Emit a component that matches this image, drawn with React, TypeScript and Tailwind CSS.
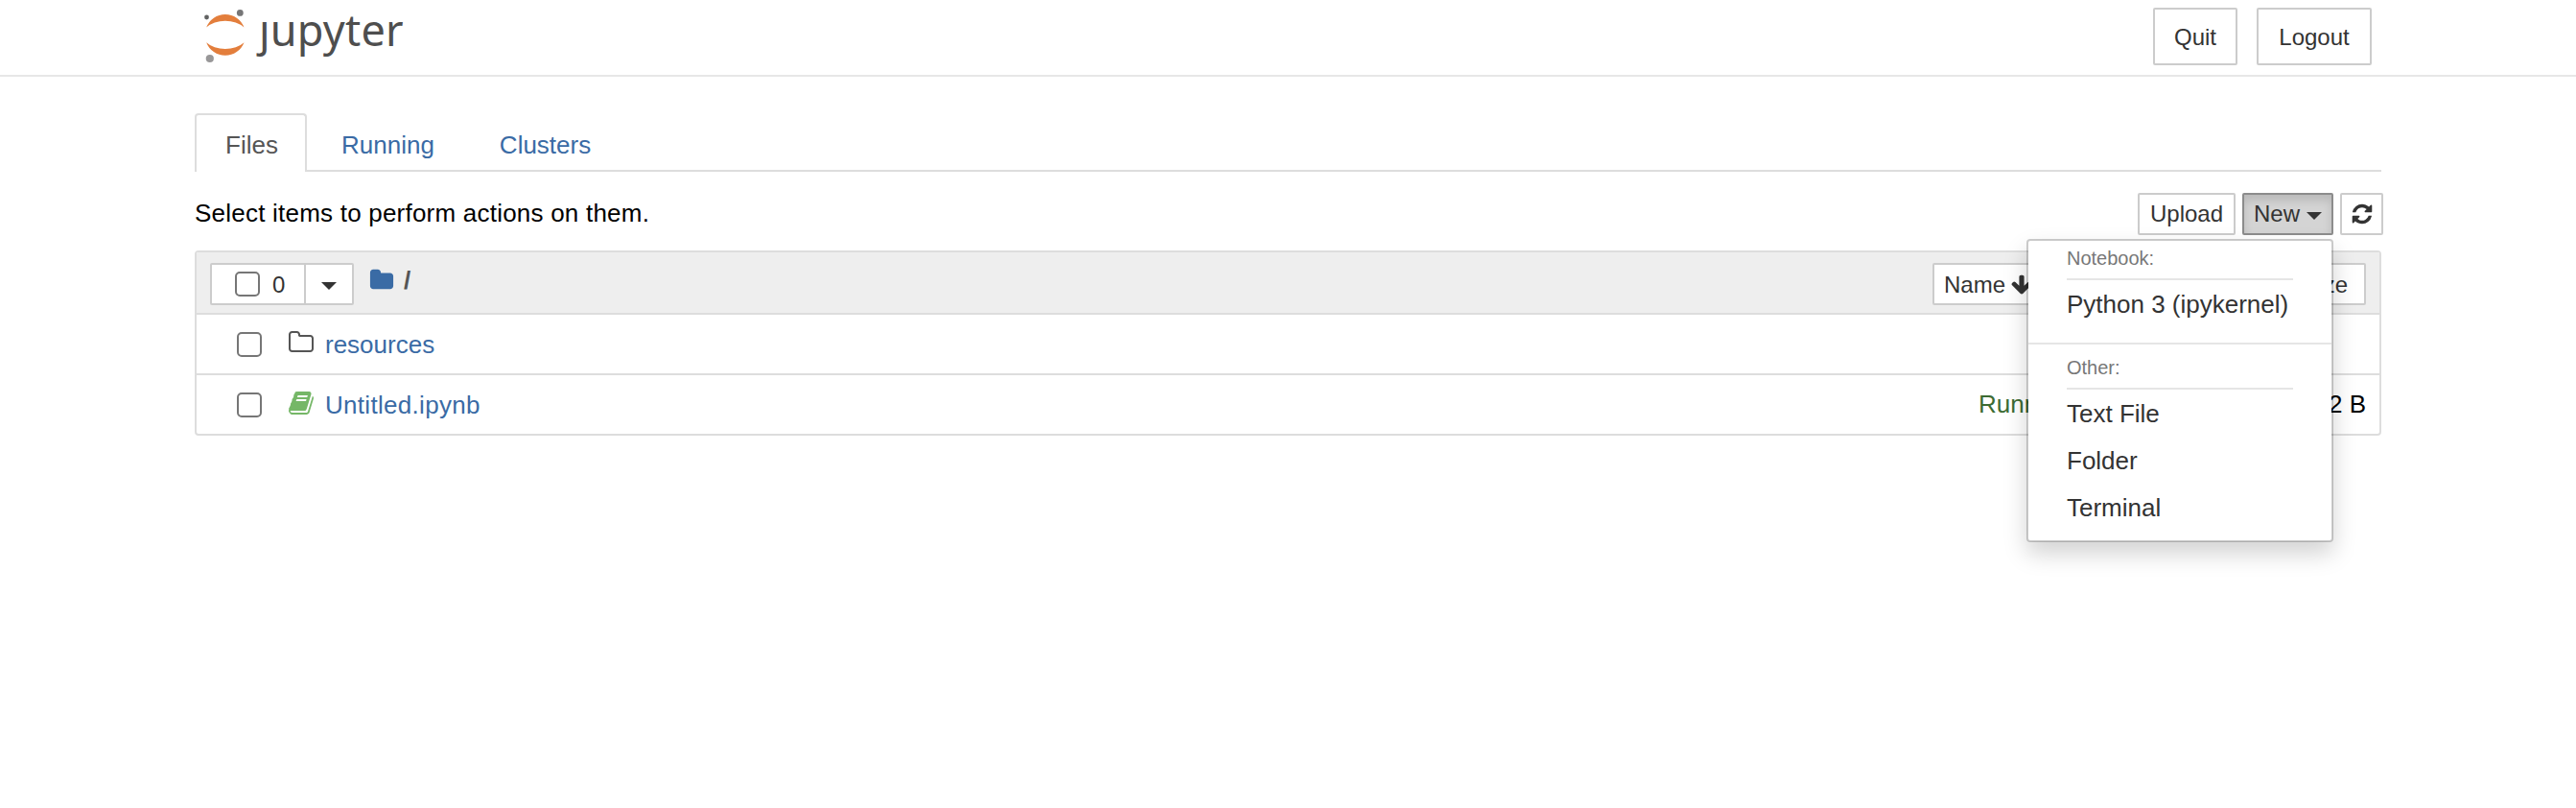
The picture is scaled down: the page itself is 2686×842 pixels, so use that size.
import React from "react";

const ICONS = {
  folder:
    "M1728 608v704q0 92-66 158t-158 66h-1216q-92 0-158-66t-66-158v-960q0-92 66-158t158-66h320q92 0 158 66t66 158v32h672q92 0 158 66t66 158z",
  folderOpen:
    "M1600 1312v-704q0-40-28-68t-68-28h-704q-40 0-68-28t-28-68v-64q0-40-28-68t-68-28h-320q-40 0-68 28t-28 68v960q0 40 28 68t68 28h1216q40 0 68-28t28-68zm128-704v704q0 92-66 158t-158 66h-1216q-92 0-158-66t-66-158v-960q0-92 66-158t158-66h320q92 0 158 66t66 158v32h672q92 0 158 66t66 158z",
  book:
    "M1703 478q40 57 18 129l-275 906q-19 64-76.500 107.500t-122.500 43.500h-923q-77 0-148.500-53.500t-99.500-131.500q-24-67-2-127 0-4 3-27t4-37q1-8-3-21.500t-3-19.500q2-11 8-21t16.500-23.500 16.500-23.500q23-38 45-91.500t30-91.500q3-10 .5-30t-.5-28q3-11 17-28t17-23q21-36 42-92t25-90q1-9-2.500-32t.5-28q4-13 22-30.500t22-22.500q19-26 42.500-84.500t27.500-96.500q1-8-3-25.500t-2-26.500q2-8 9-18t18-23 17-21q8-12 16.500-30.500t15-35 16-36 19.500-32 26.500-23.500 36-11.500 47.500 5.500l-1 3q38-9 51-9h761q74 0 114 56t18 130l-274 906q-36 119-71.500 153.500t-128.500 34.500h-869q-27 0-38 15-11 16-1 43 24 70 144 70h923q29 0 56-15.500t35-41.500l300-987q7-22 5-57 38 15 59 43zm-1064 2q-4 13 2 22.500t20 9.500h608q13 0 25.500-9.500t16.500-22.500l21-64q4-13-2-22.500t-20-9.500h-608q-13 0-25.500 9.500t-16.500 22.500zm-83 256q-4 13 2 22.500t20 9.500h608q13 0 25.500-9.500t16.500-22.500l21-64q4-13-2-22.500t-20-9.500h-608q-13 0-25.500 9.500t-16.500 22.500z",
  refresh:
    "M1639 1056q0 5-1 7-64 268-268 434.500t-478 166.500q-146 0-282.500-55t-243.500-157l-129 129q-19 19-45 19t-45-19-19-45v-448q0-26 19-45t45-19h448q26 0 45 19t19 45-19 45l-137 137q71 66 161 102t187 36q134 0 250-65t186-179q11-17 53-117 8-23 30-23h192q13 0 22.500 9.500t9.500 22.500zm25-800v448q0 26-19 45t-45 19h-448q-26 0-45-19t-19-45 19-45l138-138q-148-137-349-137-134 0-250 65t-186 179q-11 17-53 117-8 23-30 23h-199q-13 0-22.500-9.500t-9.500-22.500v-7q65-268 270-434.500t480-166.500q146 0 284 55.500t245 156.500l130-129q19-19 45-19t45 19 19 45z",
  arrowDown:
    "M1675 832q0 53-37 90l-651 652q-39 37-91 37-53 0-90-37l-651-652q-38-36-38-90 0-53 38-91l74-75q39-37 91-37 53 0 90 37l294 294v-704q0-52 38-90t90-38h128q52 0 90 38t38 90v704l294-294q37-37 90-37 52 0 91 37l75 75q37 39 37 91z",
};

function Icon({ name, className }: { name: keyof typeof ICONS; className: string }) {
  return (
    <svg viewBox="0 0 1792 1792" fill="currentColor" className={`shrink-0 ${className}`}>
      <path d={ICONS[name]} />
    </svg>
  );
}

function Caret() {
  return <span className="border-x-8 border-t-8 border-x-transparent border-t-[#333]" />;
}

function Checkbox() {
  return <span className="block size-[26px] shrink-0 rounded-[5px] border-2 border-[#767676] bg-white" />;
}

function Logo() {
  return (
    <div className="flex h-[78px] items-start">
      <svg viewBox="0 0 44 60" className="mt-2 h-[60px] w-11 shrink-0">
        <path d="M2.200 20.500 A21 21 0 0 1 41.500 20.500 A25 18 0 0 0 2.200 20.500Z" fill="#e37e3c" />
        <path d="M2.200 36.200 A21 21 0 0 0 41.500 36.200 A25 18 0 0 1 2.200 36.200Z" fill="#e37e3c" />
        <circle cx="37.300" cy="5.400" r="3.400" fill="#767677" />
        <circle cx="2.500" cy="10" r="2.400" fill="#616262" />
        <circle cx="5.800" cy="53" r="4.100" fill="#989798" />
      </svg>
      <span className="ml-[13px] -mt-[1px] font-['Noto_Sans'] text-[45px] leading-[64px] tracking-[0.2px] text-[#4e4e4e] [clip-path:polygon(-10px_23px,15px_23px,15px_0,100%_0,100%_100%,-10px_100%)]">
        jupyter
      </span>
    </div>
  );
}

const button = "flex items-center border-2 border-[#ccc] bg-white rounded-[2px] text-[#333]";

function NewMenu() {
  const item = "h-[49px] pl-10 leading-[48px]";
  const label = "ml-10 w-[236px] border-b-2 border-[#e5e5e5] text-[20px] leading-[24px] text-[#777]";
  return (
    <div className="absolute right-0 top-[48px] z-10 h-[316px] w-[320px] rounded-[4px] border-2 border-black/20 bg-white bg-clip-padding text-[26px] text-[#333] shadow-[0_12px_24px_rgba(0,0,0,0.175)]">
      <div className={`${label} h-[41px] pt-[6px]`}>Notebook:</div>
      <div className={`${item} mt-[1px] mb-[15px]`}>Python 3 (ipykernel)</div>
      <div className="h-[2px] bg-[#e5e5e5]" />
      <div className={`${label} h-[47px] pt-[12px]`}>Other:</div>
      <div className="mt-[1px]">
        <div className={item}>Text File</div>
        <div className={item}>Folder</div>
        <div className={item}>Terminal</div>
      </div>
    </div>
  );
}

export default function App() {
  return (
    <div className="h-[842px] w-[2686px] overflow-hidden bg-white font-['Liberation_Sans',Arial,sans-serif] text-[26px] leading-[36px] text-black">
      <header className="flex h-20 items-start justify-between border-b-2 border-[#e7e7e7] pl-[213px] pr-[213px]">
        <Logo />
        <div className="mt-2 flex gap-5 text-[24px]">
          <button className={`${button} h-[60px] w-[88px] justify-center pt-[2px]`}>Quit</button>
          <button className={`${button} h-[60px] w-[120px] justify-center pt-[2px]`}>Logout</button>
        </div>
      </header>

      <main className="mx-[203px] pt-[38px]">
        <nav className="flex h-[61px] items-start border-b-2 border-[#ddd]">
          <a className="h-[61px] w-[117px] rounded-t-[4px] border-2 border-b-0 border-[#ddd] bg-white pl-[30px] pt-[13px] text-[#555]">
            Files
          </a>
          <a className="ml-[36px] pt-[15px] text-[#3a6ba5]">Running</a>
          <a className="ml-[68px] pt-[15px] text-[#3a6ba5]">Clusters</a>
        </nav>

        <div className="-mr-[2px] flex h-[82px] items-start justify-between pt-[22px]">
          <p className="mt-[3px] tracking-[0.22px]">Select items to perform actions on them.</p>
          <div className="flex gap-[7px] text-[24px]">
            <button className={`${button} h-[44px] w-[102px] justify-center`}>Upload</button>
            <div className="relative">
              <button className="flex h-[44px] w-[95px] items-center gap-[7px] rounded-[2px] border-2 border-[#8c8c8c] bg-[#d4d4d4] pl-[10px] text-[#333] shadow-[inset_0_6px_10px_rgba(0,0,0,0.125)]">
                New
                <span className="flex pt-1">
                  <Caret />
                </span>
              </button>
              <NewMenu />
            </div>
            <button className={`${button} h-[44px] w-[45px] justify-center`}>
              <Icon name="refresh" className="size-6" />
            </button>
          </div>
        </div>

        <section className="rounded-[4px] border-2 border-[#ddd]">
          <div className="flex h-[65px] items-start justify-between border-b-2 border-[#ddd] bg-[#eee] pl-[14px] pr-[14px] pt-[11px]">
            <div className="flex items-start">
              <div className={`${button} h-[44px] w-[150px] text-[24px]`}>
                <div className="flex h-full w-[98px] items-center border-r-2 border-[#ccc] pl-6">
                  <Checkbox />
                  <span className="ml-[13px] pt-[2px]">0</span>
                </div>
                <div className="flex flex-1 justify-center pt-1">
                  <Caret />
                </div>
              </div>
              <Icon name="folder" className="ml-4 mt-[5px] size-[26px] text-[#3a6ba5]" />
              <span className="ml-[10px] font-bold text-[#555]">/</span>
            </div>
            <div className="flex text-[24px]">
              <button className={`${button} h-[44px] w-[106px] gap-[5px] pl-[10px] pt-[2px]`}>
                Name
                <Icon name="arrowDown" className="size-6" />
              </button>
              <button className={`${button} ml-[212px] h-[44px] w-[134px] justify-end pr-[17px] pt-[2px]`}>
                File size
              </button>
            </div>
          </div>

          <div className="flex h-[63px] items-center border-b-2 border-[#ddd] pl-[42px] pr-[14px]">
            <Checkbox />
            <Icon name="folderOpen" className="-mt-1 ml-[27px] size-7 text-[#555]" />
            <a className="ml-[11px] text-[#3a6ba5]">resources</a>
          </div>

          <div className="flex h-[61px] items-center pl-[42px] pr-[14px]">
            <Checkbox />
            <Icon name="book" className="-mt-1 ml-[27px] size-7 text-[#75b767]" />
            <a className="ml-[11px] tracking-[0.3px] text-[#3a6ba5]">Untitled.ipynb</a>
            <div className="-mt-[2px] ml-auto flex w-[404px] justify-between">
              <span className="text-[#3c6b33]">Running</span>
              <span>72 B</span>
            </div>
          </div>
        </section>
      </main>
    </div>
  );
}
